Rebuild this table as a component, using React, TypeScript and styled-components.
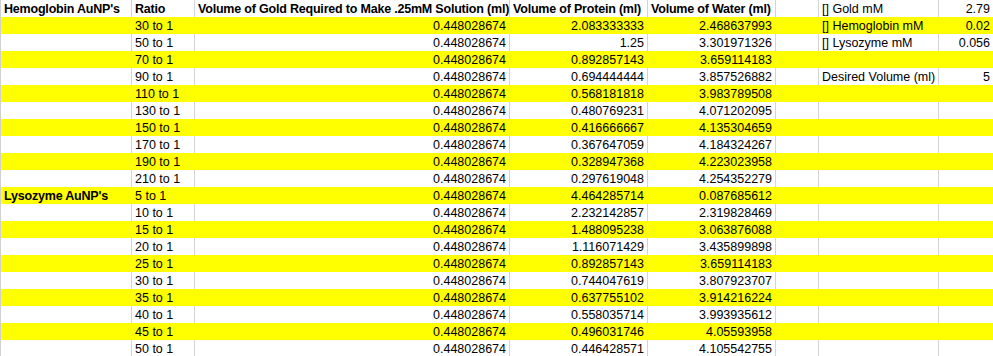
import React from 'react'
import styled, { createGlobalStyle } from 'styled-components'

const GlobalStyle = createGlobalStyle`
  html, body {
    margin: 0;
    padding: 0;
    background: #ffffff;
    overflow: hidden;
  }
`

const COLUMNS = [131, 63, 315, 138, 128, 43, 120, 55]

// styled components
const Sheet = styled.div`
  display: flex;
  flex-direction: column;
  width: 993px;
  border-left: 1px solid #d0d0d0;
  font-family: "Liberation Sans", Arial, sans-serif;
  font-size: 12.5px;
  color: #000000;
`

const Row = styled.div<{ $fill: boolean }>`
  display: grid;
  grid-template-columns: ${COLUMNS.map((w) => `${w}px`).join(' ')};
  height: 17px;
  background: ${(p) => (p.$fill ? '#ffff00' : '#ffffff')};
  --grid-line: ${(p) => (p.$fill ? '#ffff00' : '#d4d4d4')};
`

const Cell = styled.div<{ $align?: 'left' | 'right'; $bold?: boolean }>`
  display: flex;
  align-items: flex-end;
  justify-content: ${(p) => (p.$align === 'right' ? 'flex-end' : 'flex-start')};
  height: 17px;
  box-sizing: border-box;
  padding: 0 3px 1px 3px;
  border-right: 1px solid var(--grid-line);
  line-height: 14px;
  white-space: nowrap;
  font-weight: ${(p) => (p.$bold ? 700 : 400)};
  letter-spacing: ${(p) => (p.$bold ? '-0.2px' : '0')};
`

type RowData = {
  label?: string
  ratio: string
  protein: string
  water: string
  paramLabel?: string
  paramValue?: string
}

const GOLD = '0.448028674'

const rows: RowData[] = [
  { ratio: '30 to 1', protein: '2.083333333', water: '2.468637993', paramLabel: '[] Hemoglobin mM', paramValue: '0.02' },
  { ratio: '50 to 1', protein: '1.25', water: '3.301971326', paramLabel: '[] Lysozyme mM', paramValue: '0.056' },
  { ratio: '70 to 1', protein: '0.892857143', water: '3.659114183' },
  { ratio: '90 to 1', protein: '0.694444444', water: '3.857526882', paramLabel: 'Desired Volume (ml)', paramValue: '5' },
  { ratio: '110 to 1', protein: '0.568181818', water: '3.983789508' },
  { ratio: '130 to 1', protein: '0.480769231', water: '4.071202095' },
  { ratio: '150 to 1', protein: '0.416666667', water: '4.135304659' },
  { ratio: '170 to 1', protein: '0.367647059', water: '4.184324267' },
  { ratio: '190 to 1', protein: '0.328947368', water: '4.223023958' },
  { ratio: '210 to 1', protein: '0.297619048', water: '4.254352279' },
  { label: "Lysozyme AuNP's", ratio: '5 to 1', protein: '4.464285714', water: '0.087685612' },
  { ratio: '10 to 1', protein: '2.232142857', water: '2.319828469' },
  { ratio: '15 to 1', protein: '1.488095238', water: '3.063876088' },
  { ratio: '20 to 1', protein: '1.116071429', water: '3.435899898' },
  { ratio: '25 to 1', protein: '0.892857143', water: '3.659114183' },
  { ratio: '30 to 1', protein: '0.744047619', water: '3.807923707' },
  { ratio: '35 to 1', protein: '0.637755102', water: '3.914216224' },
  { ratio: '40 to 1', protein: '0.558035714', water: '3.993935612' },
  { ratio: '45 to 1', protein: '0.496031746', water: '4.05593958' },
  { ratio: '50 to 1', protein: '0.446428571', water: '4.105542755' },
]

const App = () => {
  return (
    <>
      <GlobalStyle />
      <Sheet>
        <Row $fill={false}>
          <Cell $bold>Hemoglobin AuNP's</Cell>
          <Cell $bold>Ratio</Cell>
          <Cell $bold>Volume of Gold Required to Make .25mM Solution (ml)</Cell>
          <Cell $bold>Volume of Protein (ml)</Cell>
          <Cell $bold>Volume of Water (ml)</Cell>
          <Cell />
          <Cell>[] Gold mM</Cell>
          <Cell $align="right">2.79</Cell>
        </Row>
        {rows.map((r, i) => (
          <Row key={i} $fill={i % 2 === 0}>
            <Cell $bold>{r.label}</Cell>
            <Cell>{r.ratio}</Cell>
            <Cell $align="right">{GOLD}</Cell>
            <Cell $align="right">{r.protein}</Cell>
            <Cell $align="right">{r.water}</Cell>
            <Cell />
            <Cell>{r.paramLabel}</Cell>
            <Cell $align="right">{r.paramValue}</Cell>
          </Row>
        ))}
      </Sheet>
    </>
  )
}

export default App
